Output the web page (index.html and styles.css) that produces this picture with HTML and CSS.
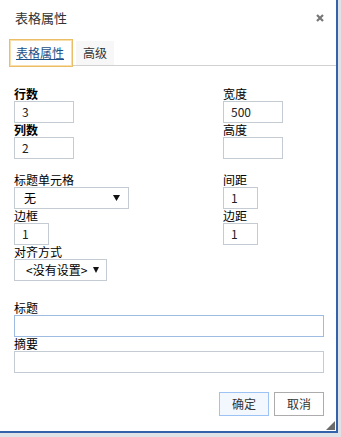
FILE: index.html
```html
<!DOCTYPE html>
<html lang="zh">
<head>
<meta charset="utf-8">
<link rel="stylesheet" href="styles.css">
</head>
<body>
<div class="dialog">
  <div class="header">
    <span class="title">表格属性</span>
    <svg class="close" width="8" height="8" viewBox="0 0 8 8"><path d="M1 1L7 7M7 1L1 7" stroke="#777" stroke-width="2.2"/></svg>
  </div>
  <div class="tabs">
    <div class="tab active"><span>表格属性</span></div>
    <div class="tab"><span>高级</span></div>
  </div>
  <div class="content">
    <div class="section first">
      <div class="col left">
        <label class="lbl bold">行数</label>
        <div class="inp w60">3</div>
        <label class="lbl bold">列数</label>
        <div class="inp w60">2</div>
      </div>
      <div class="col">
        <label class="lbl">宽度</label>
        <div class="inp w60">500</div>
        <label class="lbl">高度</label>
        <div class="inp w60"></div>
      </div>
    </div>
    <div class="section second">
      <div class="col left">
        <label class="lbl">标题单元格</label>
        <div class="sel w115"><span>无</span><svg width="7" height="6" viewBox="0 0 7 6"><path d="M0 0H7L3.5 6Z" fill="#111"/></svg></div>
        <label class="lbl">边框</label>
        <div class="inp w35">1</div>
        <label class="lbl">对齐方式</label>
        <div class="sel w93 s2"><span>&lt;没有设置&gt;</span><svg width="6" height="6" viewBox="0 0 6 6"><path d="M0 0H6L3 6Z" fill="#111"/></svg></div>
      </div>
      <div class="col">
        <label class="lbl">间距</label>
        <div class="inp w35">1</div>
        <label class="lbl">边距</label>
        <div class="inp w35">1</div>
      </div>
    </div>
    <div class="section third">
      <label class="lbl">标题</label>
      <div class="inp wide focus"></div>
      <label class="lbl">摘要</label>
      <div class="inp wide"></div>
    </div>
  </div>
  <div class="buttons">
    <button class="btn ok">确定</button>
    <button class="btn">取消</button>
  </div>
  <div class="grip"></div>
</div>
</body>
</html>
```
FILE: styles.css
```css
* { box-sizing: border-box; }
html, body { margin: 0; padding: 0; }
body {
  background: #dfe2e7;
  font-family: "Noto Sans CJK SC", "Liberation Sans", sans-serif;
  font-size: 12px;
  color: #000;
}
.dialog {
  position: relative;
  width: 338px;
  height: 433px;
  background: #fff;
  border-right: 2px solid #3563ab;
  border-bottom: 2px solid #3563ab;
  display: flex;
  flex-direction: column;
}
.header {
  height: 39px;
  display: flex;
  justify-content: space-between;
  align-items: flex-start;
  padding: 10px 12px 0 15px;
}
.title {
  font-size: 13px;
  line-height: 16px;
  color: #333;
}
.close { margin-top: 4px; }
.tabs {
  margin-left: 9px;
  height: 27px;
  border-bottom: 1px solid #d1d1d1;
  display: flex;
  align-items: flex-start;
}
.tab {
  height: 24px;
  margin-top: 2px;
  margin-left: 3px;
  padding: 0 7px;
  background: #f7f7f7;
  line-height: 24px;
  color: #333;
}
.tab.active {
  position: relative;
  margin: 0;
  height: 28px;
  width: 64px;
  background: #fff;
  border: 1px solid #ebbd66;
  box-shadow: inset 0 0 0 1px #f7deaa;
  line-height: 26px;
  padding: 0 6px;
  color: #1b4f87;
}
.tab.active span { text-decoration: underline; }
.content { padding: 0 14px; }
.section { display: flex; }
.section.first { padding-top: 21px; }
.section.second { padding-top: 14px; }
.section.third { padding-top: 20px; flex-direction: column; }
.col { display: flex; flex-direction: column; align-items: flex-start; }
.col.left { width: 209px; }
.lbl {
  display: block;
  line-height: 14px;
  height: 14px;
  white-space: nowrap;
}
.bold { font-weight: bold; }
.inp {
  height: 22px;
  border: 1px solid #c4cbd3;
  padding: 0 7px;
  line-height: 20px;
  color: #222;
}
.w60 { width: 60px; }
.w35 { width: 35px; }
.wide { width: 310px; }
.focus { border-color: #9ebbe2; }
.sel {
  height: 22px;
  border: 1px solid #c4cbd3;
  display: flex;
  align-items: center;
  justify-content: space-between;
  padding: 0 8px 0 9px;
  line-height: 20px;
}
.sel.s2 { padding: 0 7px 0 11px; }
.w115 { width: 115px; }
.w93 { width: 93px; }
.buttons {
  display: flex;
  justify-content: flex-end;
  gap: 5px;
  padding: 19px 12px 0 0;
}
.btn {
  width: 50px;
  height: 24px;
  font-family: inherit;
  font-size: 12px;
  color: #333;
  background: #fff;
  border: 1px solid #acacac;
  padding: 0;
  line-height: 22px;
}
.btn.ok {
  background: #f3f8fe;
  border-color: #9cc3f4;
}
.grip {
  position: absolute;
  right: 1px;
  bottom: 1px;
  width: 0;
  height: 0;
  border-style: solid;
  border-width: 0 0 9px 9px;
  border-color: transparent transparent #6b6b6b transparent;
}
```
